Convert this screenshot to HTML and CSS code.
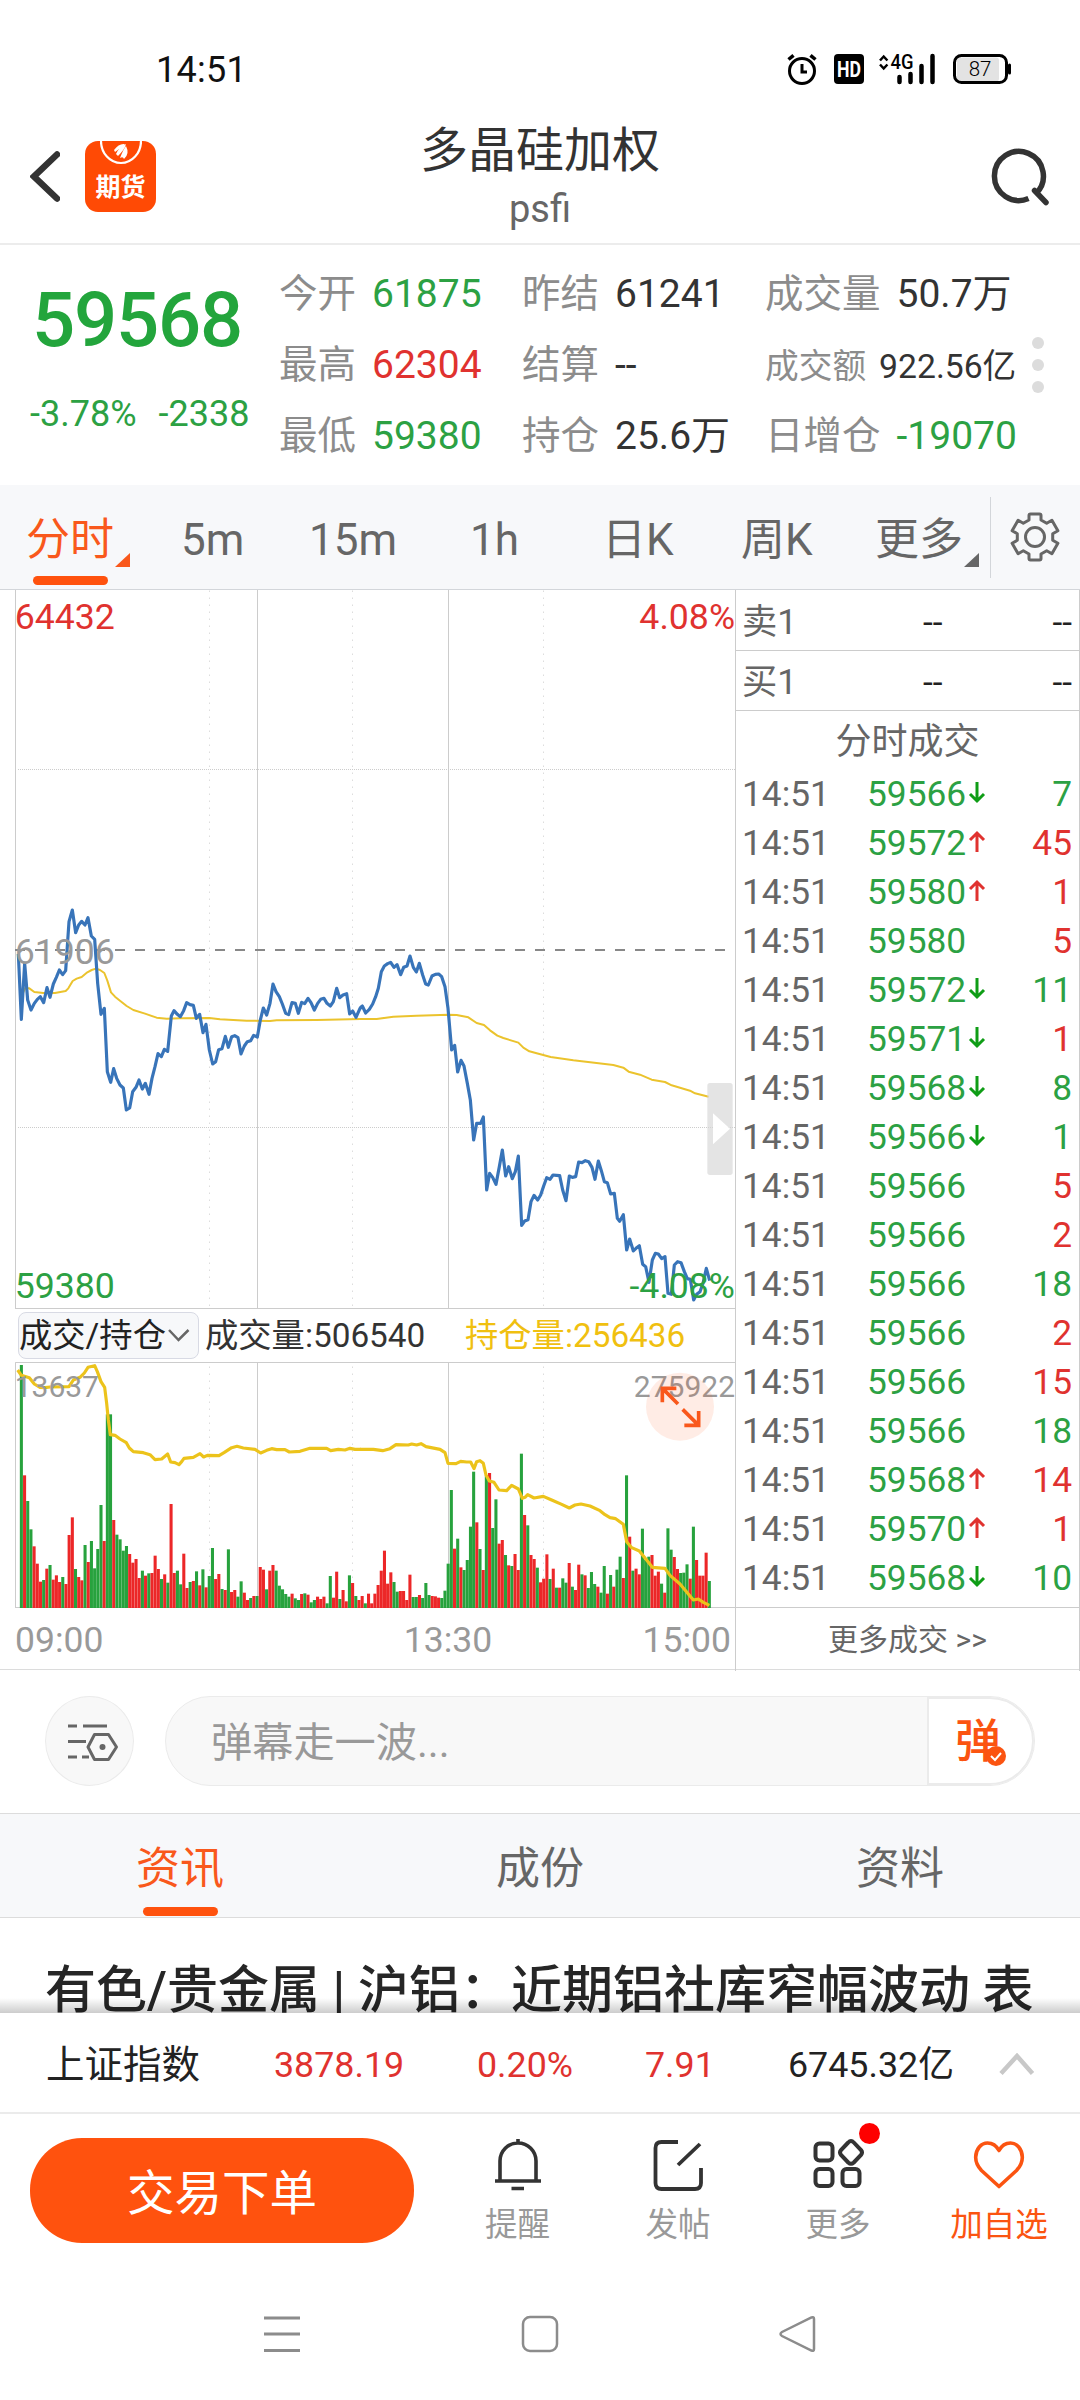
FILE: index.html
```html
<!DOCTYPE html>
<html lang="zh-CN">
<head>
<meta charset="utf-8">
<title>多晶硅加权 psfi</title>
<link rel="stylesheet" href="styles.css">
</head>
<body>
<div class="statusbar">
  <span class="clock">14:51</span>
  <svg class="status-icons" width="236" height="40" viewBox="780 48 236 40">
    <g fill="none" stroke="#000" stroke-width="3">
      <circle cx="802" cy="71" r="12.5"/>
      <path d="M802 64v8h5"/>
      <path d="M788.5 59.500l5-4.200M815.500 59.500l-5-4.200" stroke-width="3.500"/>
    </g>
    <rect x="834" y="54" width="30" height="30" rx="4"/>
    <text x="849" y="77" font-size="22" font-weight="700" fill="#fff" text-anchor="middle" textLength="24" lengthAdjust="spacingAndGlyphs">HD</text>
    <path d="M880 60.500l3.700-4 3.700 4M880 64.500l3.700 4 3.700-4" fill="none" stroke="#000" stroke-width="2.500"/>
    <text x="890.500" y="68.500" font-size="19.500" font-weight="500" textLength="23" lengthAdjust="spacingAndGlyphs">4G</text>
    <path d="M899.500 77v5M910.500 74v8M921.500 66v16M932.500 56v26" stroke="#000" stroke-width="4.500" stroke-linecap="round"/>
    <rect x="957" y="57.500" width="42" height="24" rx="3" fill="#e3e3e3"/>
    <rect x="954.500" y="55.500" width="52" height="27" rx="7" fill="none" stroke="#000" stroke-width="3"/>
    <path d="M1009.500 65v8" stroke="#000" stroke-width="3" stroke-linecap="round"/>
    <text x="980" y="76" font-size="20.500" font-weight="300" text-anchor="middle">87</text>
  </svg>
</div>

<header class="header">
  <div class="header-left">
    <svg width="30" height="54" viewBox="30 150 30 54"><path d="M57 154.500L34 176.500l23 22" fill="none" stroke="#333" stroke-width="6.500" stroke-linecap="round" stroke-linejoin="miter"/></svg>
    <div class="app-icon">
      <svg class="leaf" width="42" height="26" viewBox="0 0 42 26">
        <path d="M1 0a20 22 0 0 0 40 0" fill="none" stroke="#fff" stroke-width="2.200"/>
        <path d="M14 9q5-7 11-6-4 4-10 8zM16 13q3-7 10-10-1 5-8 12zM20 17q3-8 6-12 4 8-2 13-1-3-4-1z" fill="#fff"/>
      </svg>
      <span>期货</span>
    </div>
  </div>
  <div class="header-title"><h1>多晶硅加权</h1><p>psfi</p></div>
  <svg class="search" width="64" height="64" viewBox="990 146 64 64">
    <path d="M1028.500 199.500A24.500 24.500 0 1 1 1036 194.500" fill="none" stroke="#333" stroke-width="5.500"/>
    <path d="M1034.500 191.500l11.500 12" stroke="#333" stroke-width="5.500" stroke-linecap="round"/>
  </svg>
</header>

<section class="quote">
  <div class="last">
    <strong>59568</strong>
    <div class="change"><span>-3.78%</span><span>-2338</span></div>
  </div>
  <div class="stats">
    <div><label>今开</label><b class="down">61875</b></div>
    <div><label>昨结</label><b>61241</b></div>
    <div><label>成交量</label><b>50.7万</b></div>
    <div><label>最高</label><b class="up">62304</b></div>
    <div><label>结算</label><b>--</b></div>
    <div class="small"><label>成交额</label><b>922.56亿</b></div>
    <div><label>最低</label><b class="down">59380</b></div>
    <div><label>持仓</label><b>25.6万</b></div>
    <div><label>日增仓</label><b class="down">-19070</b></div>
  </div>
  <div class="dots"><i></i><i></i><i></i></div>
</section>

<nav class="periods">
  <span class="active corner">分时</span>
  <span>5m</span>
  <span>15m</span>
  <span>1h</span>
  <span>日K</span>
  <span>周K</span>
  <span class="corner">更多</span>
  <div class="settings">
    <svg width="54" height="54" viewBox="-27 -27 54 54" fill="none" stroke="#666" stroke-width="3" stroke-linejoin="round">
      <path d="M-6-17V-21.500q0-1.500 1.500-1.500H4.500q1.500 0 1.500 1.500V-17L11.700-13.700 16.900-16.700 22.900-6.300 17.700-3.300V3.300L22.900 6.300 16.900 16.700 11.700 13.700 6 17V21.500q0 1.500-1.500 1.500H-4.500q-1.500 0-1.500-1.500V17L-11.700 13.700-16.900 16.700-22.900 6.300-17.700 3.300V-3.300L-22.900-6.300-16.900-16.700-11.700-13.700z"/>
      <circle r="9.500"/>
    </svg>
  </div>
</nav>

<main class="market">
  <div class="charts">
    <svg class="plot" width="735" height="719" viewBox="0 -870 2205 2157">
      <g class="grid">
        <path d="M46.500-870V1287M772.500-870V1287M1345.500-870V1287M46 1285.500H2205"/>
        <path class="dot-v" d="M628.500-868V1280M1057.500-868V1280M1630.500-868V1280"/>
        <path class="dot-h" d="M54-331.500H2205M54 742.500H2205"/>
      </g>
      <path class="base" d="M45 210H2185"/>
      <polyline class="avg" points="66,345 75,325 88,325 103,336 130,339 165,339 197,333 205,325 218,303 230,296 245,291 262,277 275,270 288,266 300,270 313,279 322,302 333,337 345,350 360,362 380,378 400,390 435,401 470,413 500,416 540,415 628,414 660,418 740,422 810,423 830,421 950,420 1082,417"/>
      <polyline class="avg" transform="translate(1080 0)" points="0,417 50,417 100,410 170,407 265,404 290,405 325,412 350,429 372,435 390,451 412,467 430,474 475,488 490,503 508,514 530,520 572,531 640,541 760,555 790,563 806,575 840,584 875,599 915,606 935,616 990,632 1005,640 1046,650"/>
      <polyline class="price" points="55,222 64,418 74,250 83,360 93,390 103,370 112,358 121,350 131,368 141,323 150,352 160,312 169,292 178,270 188,284 197,272 207,125 217,90 227,158 236,135 245,124 255,135 264,113 274,168 284,178 293,310 303,403 313,385 322,575 332,607 341,566 350,595 360,615 370,624 379,690 389,684 398,635 408,622 417,600 427,627 436,610 447,643 456,595 465,560 474,521 484,530 493,508 503,514 514,408 522,392 532,403 541,410 551,392 560,368 570,374 580,376 589,415 599,403 609,458 618,433 628,510 638,552 647,545 656,509 666,506 676,469 685,502 695,470 704,467 714,473 723,522 733,498 742,485 752,482 761,466 772,471 781,420 790,384 800,405 810,370 819,312 828,335 838,350 847,372 857,400 866,404 876,368 886,370 895,400 905,367 914,371 924,355 933,368 943,390 953,370 962,358 972,355 981,370 991,378 1000,365 1010,325 1019,353 1029,345 1040,341 1049,402 1058,393 1068,412 1080,385 1087,378"/>
      <polyline class="price" transform="translate(1080 0)" points="0,385 7,378 17,399 28,388 38,372 47,350 55,325 64,275 73,258 83,251 92,247 102,262 111,254 122,284 131,262 141,258 150,228 160,262 169,276 178,250 188,285 197,312 205,315 216,288 226,283 236,282 245,290 255,320 264,385 275,510 284,496 293,576 303,541 312,558 322,610 331,660 341,780 350,730 362,730 370,711 380,930 389,880 398,892 408,913 418,860 427,810 437,888 446,860 457,896 466,875 475,828 485,1036 494,1023 504,1019 513,965 522,946 533,960 542,945 551,918 560,893 570,898 579,885 589,886 599,887 608,930 618,962 628,888 637,892 647,890 656,846 666,848 676,842 686,845 696,862 705,898 715,843 724,872 733,905 742,908 752,942 763,940 772,1015 779,1024 790,1004 800,1110 809,1077 820,1113 828,1105 838,1097 848,1153 857,1160 867,1207 877,1140 886,1120 895,1122 905,1136 915,1130 924,1240 934,1243 943,1155 953,1145 963,1148 973,1175 982,1196 991,1198 1001,1260 1010,1243 1020,1235 1029,1210 1039,1165 1049,1202"/>
      <g font-size="107">
        <text x="44" y="-752" fill="#e0322f">64432</text>
        <text x="2205" y="-752" fill="#e0322f" text-anchor="end">4.08%</text>
        <text x="44" y="251" fill="#999">61906</text>
        <text x="44" y="1253" fill="#2ca143">59380</text>
        <text x="2205" y="1253" fill="#2ca143" text-anchor="end">-4.08%</text>
      </g>
      <rect x="2122" y="609" width="76" height="276" rx="8" fill="#d6d6d6" fill-opacity=".65"/>
      <path d="M2139 700l51 46-51 47z" fill="#fff"/>
    </svg>

    <div class="legend">
      <button class="picker">成交/持仓<svg width="24" height="16" viewBox="0 0 24 16"><path d="M2 2l9.500 10L21.500 2" fill="none" stroke="#666" stroke-width="2.500"/></svg></button>
      <span class="vol">成交量:506540</span>
      <span class="oi">持仓量:256436</span>
    </div>

    <svg class="plot" width="735" height="246" viewBox="0 216 2205 738">
      <g class="grid">
        <path d="M46 217.500H2205M46.500 217V954M772.500 217V954M1345.500 217V954M46 952.500H2205"/>
        <path class="dot-v" d="M628.500 230V950M1057.500 230V950M1630.500 230V950"/>
      </g>
      <g id="volume"></g>
      <polyline class="interest" points="53,240 64,256 88,263 103,282 120,292 135,293 150,291 207,290 220,270 240,262 253,249 264,232 284,227 292,245 303,275 314,292 320,340 325,390 331,434 345,436 360,447 379,458 388,474 400,485 430,488 450,494 465,509 485,507 503,492 512,516 525,518 537,524 545,515 552,505 580,502 600,491 611,501 622,496 657,497 672,488 695,473 711,469 730,474 765,478 782,489 800,481 815,476 830,479 855,479 868,486 900,484 930,475 980,475 992,482 1015,478 1035,480 1050,475 1065,478 1082,478"/>
      <polyline class="interest" transform="translate(1080 0)" points="0,478 40,478 68,482 90,476 108,464 145,465 155,462 170,465 183,461 198,470 240,478 255,488 264,520 288,521 302,514 320,516 332,516 342,536 350,515 360,512 370,520 378,555 388,573 402,577 417,600 440,602 455,586 475,597 487,625 495,622 503,614 522,624 550,619 575,630 605,643 628,654 645,645 663,642 690,648 720,662 735,674 750,683 767,686 790,703 800,755 815,773 838,783 858,808 877,832 915,835 930,856 960,882 975,900 1000,930 1015,927 1030,937 1048,946"/>
      <g font-size="90" fill="#999">
        <text x="44" y="320">13637</text>
        <text x="2205" y="320" text-anchor="end">275922</text>
      </g>
      <circle cx="2040" cy="350" r="102" fill="#ff520e" fill-opacity=".11"/>
      <path d="M2034 342l-46-46M1987 337V295H2029M2048 358l48 48M2053 406H2096V363" fill="none" stroke="#f9581c" stroke-width="11"/>
    </svg>

    <div class="axis"><span>09:00</span><span>13:30</span><span>15:00</span></div>
  </div>

  <aside class="book">
    <div class="level"><span>卖1</span><b>--</b><b>--</b></div>
    <div class="level"><span>买1</span><b>--</b><b>--</b></div>
    <h2>分时成交</h2>
    <ul id="ticks"></ul>
    <div class="more">更多成交 &gt;&gt;</div>
  </aside>
</main>

<section class="danmu">
  <div class="danmu-set">
    <svg width="54" height="40" viewBox="0 0 54 40" fill="none" stroke="#666" stroke-width="3">
      <path d="M3 5H12M18 5H42M3 20.500H21M3 36H12M17 36H24"/>
      <path d="M29.500 13.500H43.500L51.500 26 43.500 38.500H29.500L23 26z" stroke-linejoin="round"/>
      <circle cx="37.500" cy="26" r="3" fill="#666" stroke="none"/>
    </svg>
  </div>
  <div class="danmu-input">
    <span>弹幕走一波...</span>
    <div class="danmu-toggle">弹<svg width="20" height="20" viewBox="0 0 20 20"><circle cx="10" cy="10" r="10" fill="#fb5411"/><path d="M5 10l4 4 6-7" fill="none" stroke="#fff" stroke-width="2"/></svg></div>
  </div>
</section>

<nav class="tabs"><span class="active">资讯</span><span>成份</span><span>资料</span></nav>

<article class="news"><h3>有色/贵金属 | 沪铝：近期铝社库窄幅波动 表</h3></article>

<section class="index">
  <span>上证指数</span><b class="up">3878.19</b><b class="up">0.20%</b><b class="up">7.91</b><b>6745.32亿</b>
  <svg width="36" height="24" viewBox="0 0 36 24"><path d="M2 20.500L18 3l15.500 17.500" fill="none" stroke="#c8c8c8" stroke-width="4.500"/></svg>
</section>

<footer class="actions">
  <button class="trade">交易下单</button>
  <div class="action">
    <svg width="60" height="60" viewBox="-30 -30 60 60" fill="none" stroke="#333" stroke-width="3.600">
      <path d="M-18 17V-3a18 18 0 0 1 36 0V17M-23 17H23M0-21V-25M-6.500 24.500H6" />
    </svg><span>提醒</span>
  </div>
  <div class="action">
    <svg width="60" height="60" viewBox="-30 -30 60 60" fill="none" stroke="#333" stroke-width="3.800">
      <path d="M0-22H-16.500q-6 0-6 6V19q0 6 6 6H17q6 0 6-6V4M22-20L0 1" stroke-linejoin="round"/>
    </svg><span>发帖</span>
  </div>
  <div class="action">
    <svg width="60" height="60" viewBox="-30 -30 60 60" fill="none" stroke="#333" stroke-width="4">
      <rect x="-22.500" y="-20.500" width="17" height="17" rx="4"/><rect x="-22.500" y="5" width="17" height="17" rx="4"/><rect x="4.500" y="5" width="17" height="17" rx="4"/>
      <path d="M10.200-21.500Q13-24.500 15.800-21.500L23-14Q25-11.500 23-9L15.800-1.500Q13 1 10.200-1.500L3-9Q1-11.500 3-14z"/>
    </svg><i class="badge"></i><span>更多</span>
  </div>
  <div class="action fav">
    <svg width="60" height="60" viewBox="-30 -30 60 60" fill="none" stroke="#fb5411" stroke-width="3.600" stroke-linejoin="round">
      <path d="M0 22.500L-17.500 6.500Q-23.500 0-23.300-7C-23-15-18-21-11.500-21Q-4-21 0-13.500Q4-21 11.500-21C18-21 23-15 23.300-7Q23.500 0 17.500 6.500z"/>
    </svg><span>加自选</span>
  </div>
</footer>

<div class="sysnav">
  <svg width="36" height="38" viewBox="0 0 36 38"><path d="M0 3H36M0 19H36M0 35.500H36" stroke="#8c8c8c" stroke-width="3"/></svg>
  <svg width="38" height="38" viewBox="0 0 38 38"><rect x="2" y="2" width="34" height="34" rx="7" fill="none" stroke="#8c8c8c" stroke-width="2.500"/></svg>
  <svg width="38" height="38" viewBox="0 0 38 38"><path d="M32.500 2.500q2.500-1 2.500 1.500V34q0 2.500-2.500 1.500L3 21q-3-2 0-4z" fill="none" stroke="#8c8c8c" stroke-width="2.500"/></svg>
</div>
<script src="script.js"></script>
</body>
</html>
```
FILE: styles.css
```css
* { box-sizing: border-box; }
body {
  margin: 0;
  width: 1080px;
  height: 2400px;
  overflow: hidden;
  background: #fff;
  color: #333;
  font-family: Roboto, "Noto Sans CJK SC", sans-serif;
}
h1, h2, h3, p, ul { margin: 0; padding: 0; font-weight: 400; list-style: none; }
b { font-weight: 400; }
svg { display: block; flex: none; }
button { border: 0; font-family: inherit; padding: 0; }
.up { color: #e0322f; }
.down { color: #2ca143; }

.statusbar { height: 100px; display: flex; justify-content: space-between; padding: 0 64px 0 156px; }
.clock { font-size: 36px; line-height: 40px; margin-top: 50px; color: #111; letter-spacing: .3px; }
.status-icons { margin-top: 48px; }

.header { height: 145px; border-bottom: 2px solid #ececec; display: grid; grid-template-columns: 200px 1fr 200px; align-items: center; }
.header-left { display: flex; align-items: center; gap: 25px; padding: 10px 0 0 30px; }
.app-icon { width: 71px; height: 71px; border-radius: 13px; background: #ff4a05; display: flex; flex-direction: column; align-items: center; }
.app-icon span { color: #fff; font-size: 25px; font-weight: 700; line-height: 28px; margin-top: 7px; }
.header-title { text-align: center; height: 143px; padding-top: 21px; }
.header-title h1 { font-size: 48px; line-height: 60px; }
.header-title p { font-size: 38px; line-height: 50px; color: #666; margin-top: 3px; }
.search { justify-self: end; margin: 11px 26px 0 0; }

.quote { height: 240px; display: grid; grid-template-columns: 280px 748px auto; }
.last { color: #23a53c; }
.last strong { display: block; font-size: 76px; font-weight: 500; line-height: 80px; margin: 35px 0 0 32px; letter-spacing: -1.200px; }
.change { display: flex; gap: 22px; padding-left: 30px; font-size: 36px; line-height: 40px; margin-top: 34px; color: #2ca143; }
.stats { display: grid; grid-template-columns: 243px 243px 1fr; grid-auto-rows: 71px; padding-top: 13px; font-size: 38.500px; line-height: 50px; }
.stats div { display: flex; align-items: center; gap: 16px; white-space: nowrap; margin-left: -1px; }
.stats label { color: #8c8c8c; }
.stats b { font-size: 39px; }
.stats .small, .stats .small b { font-size: 33.700px; }
.stats .small { gap: 13px; padding-top: 4px; }
.dots { display: flex; flex-direction: column; gap: 10px; padding: 92px 0 0 4px; }
.dots i { width: 12px; height: 12px; border-radius: 50%; background: #dcdcdc; }

.periods { height: 105px; background: #f7f8fa; border-bottom: 1px solid #d3d6da; display: grid; grid-template-columns: 155px 128px 161px 132px 139px 134px 141px 90px; color: #666; font-size: 44px; line-height: 104px; grid-template-rows: 104px; }
.periods > span { padding: 3px 0 0 26px; position: relative; white-space: nowrap; }
.periods .active { color: #f9581c; }
.periods .active::after { content: ""; position: absolute; left: 33px; bottom: 4px; width: 75px; height: 9px; border-radius: 5px; background: #ff520e; }
.corner::before { content: ""; position: absolute; left: 115px; top: 68px; width: 15px; height: 14px; background: currentColor; clip-path: polygon(100% 0, 100% 100%, 0 100%); }
.periods .corner + .settings { margin: 12px 0 11px; border-left: 1px solid #d3d6da; padding: 13px 0 0 17px; }

.market { height: 1080px; display: grid; grid-template-columns: 736px 344px; border-bottom: 1px solid #dcdcdc; }
.charts { border-right: 1px solid #ccc; }
.grid path { fill: none; stroke: #ccc; stroke-width: 3; }
.grid .dot-v { stroke-dasharray: 3 18; }
.grid .dot-h { stroke-dasharray: 3 3; }
.base { stroke: #888; stroke-width: 6; stroke-dasharray: 30 30; }
.avg, .price, .interest { fill: none; stroke-linejoin: round; }
.avg { stroke: #ebc32d; stroke-width: 6; }
.price { stroke: #3874b9; stroke-width: 9.500; }
.interest { stroke: #ecc31b; stroke-width: 9.500; }
.legend { height: 53px; display: flex; align-items: center; padding-left: 18px; font-size: 33.300px; line-height: 46px; white-space: nowrap; }
.picker { width: 181px; height: 47px; border: 1px solid #d8dae4; border-radius: 8px; background: #f7f8fa; font-size: 33.300px; line-height: 44px; color: #222; display: flex; align-items: center; gap: 1px; padding-left: 0; }
.vol { margin-left: 6px; width: 260px; }
.oi { color: #f0c010; }
.axis { height: 61px; display: flex; justify-content: space-between; padding: 0 4px 0 15px; font-size: 35.500px; line-height: 64px; color: #999; }
.axis span:nth-child(2) { margin-left: 150px; }

.book { border-right: 1px solid #ccc; color: #666; font-size: 35.300px; display: flex; flex-direction: column; }
.level { height: 61px; border-bottom: 1px solid #ccc; display: grid; grid-template-columns: 181px 1fr auto; line-height: 64px; padding: 0 7px 0 6px; }
.level + .level { height: 60px; line-height: 62px; }
.level b { color: #222; }
.book h2 { font-size: 36px; line-height: 62px; height: 58px; text-align: center; }
.book ul { height: 838px; }
.book li { height: 49px; line-height: 51px; display: grid; grid-template-columns: 125px auto 21px 1fr; padding: 0 7px 0 6px; }
.book li b:last-child { text-align: right; }
.book li svg { margin: 12px 0 0 2px; }
.more { border-top: 1px solid #ccc; text-align: center; font-size: 30px; line-height: 63px; }

.danmu { height: 143px; display: flex; gap: 32px; padding: 26px 0 0 45px; }
.danmu-set { width: 89px; height: 90px; border-radius: 50%; border: 1px solid #ebebeb; background: #f8f8f8; display: flex; align-items: center; justify-content: center; padding-left: 4px; }
.danmu-input { margin-left: -1px; width: 870px; height: 90px; border-radius: 45px; border: 1px solid #ebebeb; background: #f8f8f8; display: flex; justify-content: space-between; padding-left: 45px; font-size: 41.200px; line-height: 93px; color: #999; overflow: hidden; }
.danmu-toggle { width: 107px; position: relative; background: #fff; border: 2px solid #ebebeb; border-radius: 0 45px 45px 0; color: #fb5411; font-size: 46px; line-height: 84px; font-weight: 500; padding-left: 26px; }
.danmu-toggle svg { position: absolute; left: 57px; top: 47px; }

.tabs { height: 105px; background: #f7f8fa; border-top: 1px solid #dcdcdc; border-bottom: 1px solid #dcdcdc; display: grid; grid-template: 103px / repeat(3, 1fr); text-align: center; font-size: 44px; line-height: 111px; color: #666; }
.tabs span { position: relative; }
.tabs .active { color: #f9581c; }
.tabs .active::after { content: ""; position: absolute; left: 143px; bottom: 1px; width: 75px; height: 9px; border-radius: 5px; background: #ff520e; }

.news { height: 95px; position: relative; overflow: hidden; padding: 38px 0 0 45px; }
.news h3 { font-size: 51px; font-weight: 500; line-height: 70px; color: #262626; white-space: nowrap; }
.news::after { content: ""; position: absolute; left: 0; right: 0; bottom: 0; height: 15px; background: linear-gradient(rgba(0,0,0,0), rgba(0,0,0,.2)); }

.index { height: 101px; border-bottom: 2px solid #ebebeb; display: grid; grid-template-columns: 228px 203px 168px 143px 211px 36px; padding: 4px 0 0 46px; align-items: center; font-size: 35.800px; line-height: 50px; color: #222; white-space: nowrap; }
.index span { font-size: 38.500px; }
.index .up { color: #e0322f; }

.actions { height: 166px; display: grid; grid-template-columns: 437px 161px 160px 160px 162px; padding-top: 24px; color: #999; font-size: 32.500px; }
.trade { margin-left: 30px; width: 384px; height: 105px; border-radius: 52px; background: #ff520e; color: #fff; font-size: 47.500px; line-height: 105px; padding-top: 4px; }
.action { display: flex; flex-direction: column; align-items: center; position: relative; line-height: 40px; }
.action svg { margin-top: -4px; }
.action span { margin-top: 11px; }
.fav { color: #fb5411; }
.badge { position: absolute; left: 101px; top: -15px; width: 21px; height: 21px; border-radius: 50%; background: #fe0000; }
.sysnav { height: 120px; display: flex; justify-content: space-between; padding: 35px 263px 0 264px; }
```
FILE: script.js
```js
// One entry per minute: direction and the y coordinate of the bar's top edge.
const bars = `g225 r556 g633 g718 r769 r821 r875 g870 r836 g825 r869 r856 r876 g861 r882 r735 r682 g837 r861 r871
g765 r816 g753 g835 g777 g645 r753 g373 g373 r690 g734 g748 g782 g768 r792 r818 r807 r864 g842 r857
g850 r849 r797 r837 g867 r853 g878 r642 r849 g842 g883 r791 r894 g876 r873 g844 r886 g838 r892 g858
g774 r867 r852 g897 r900 g778 r906 r900 g920 g874 r908 r930 g924 r918 g918 r831 r839 g898 r842 r825
g842 g887 g898 g912 g920 r911 g925 g930 r912 g910 r914 g937 g930 r920 r927 r920 g940 g858 r923 r845
g927 r900 r934 g856 r879 g918 r930 r918 g940 r911 r940 r911 r885 r842 r782 r881 r847 g876 g905 r903
r903 r930 r854 g921 g921 r915 g924 g879 g915 r918 r919 r923 g924 g902 g821 g600 r776 g746 r832 g840
g810 g710 g545 r697 g777 r840 g556 r549 g714 g628 r761 r750 g795 r826 g828 r792 r840 g491 r675 g706
r795 r807 g833 r877 r866 r793 g867 r836 g893 r893 g865 g878 r819 g890 r900 r824 g853 r856 g894 g846
g882 r890 g908 g828 r911 g855 r890 g839 g800 r864 g556 r740 g842 r836 r853 g716 g809 g800 r795 r857
r845 g881 r908 g715 g779 r801 r837 g849 g848 g823 r866 g710 r810 r857 r857 r788 g873`.split(/\s+/);

const bottom = 954;
document.getElementById("volume").innerHTML = bars.map((bar, i) => {
  const top = Number(bar.slice(1));
  const x = (59.5 + i * 9.555).toFixed(1);
  const fill = bar[0] === "g" ? "#27a23d" : "#ec2728";
  return `<rect x="${x}" y="${top}" width="9.2" height="${bottom - top}" fill="${fill}"/>`;
}).join("");

// price, tick direction (d = down, u = up, - = flat), size, side
const ticks = `59566 d 7 down|59572 u 45 up|59580 u 1 up|59580 - 5 up|59572 d 11 down|59571 d 1 up|59568 d 8 down|59566 d 1 down|59566 - 5 up|59566 - 2 up|59566 - 18 down|59566 - 2 up|59566 - 15 up|59566 - 18 down|59568 u 14 up|59570 u 1 up|59568 d 10 down`.split("|");
const arrows = {
  d: '<path d="M9 1V20M2 13l7 7 7-7" stroke="#0f9d16"/>',
  u: '<path d="M9 22V3M2 10l7-7 7 7" stroke="#e0322f"/>',
  "-": ""
};
document.getElementById("ticks").innerHTML = ticks.map(row => {
  const [price, dir, size, side] = row.split(" ");
  return `<li><span>14:51</span><b class="down">${price}</b><svg width="18" height="24" fill="none" stroke-width="3">${arrows[dir]}</svg><b class="${side}">${size}</b></li>`;
}).join("");
```
